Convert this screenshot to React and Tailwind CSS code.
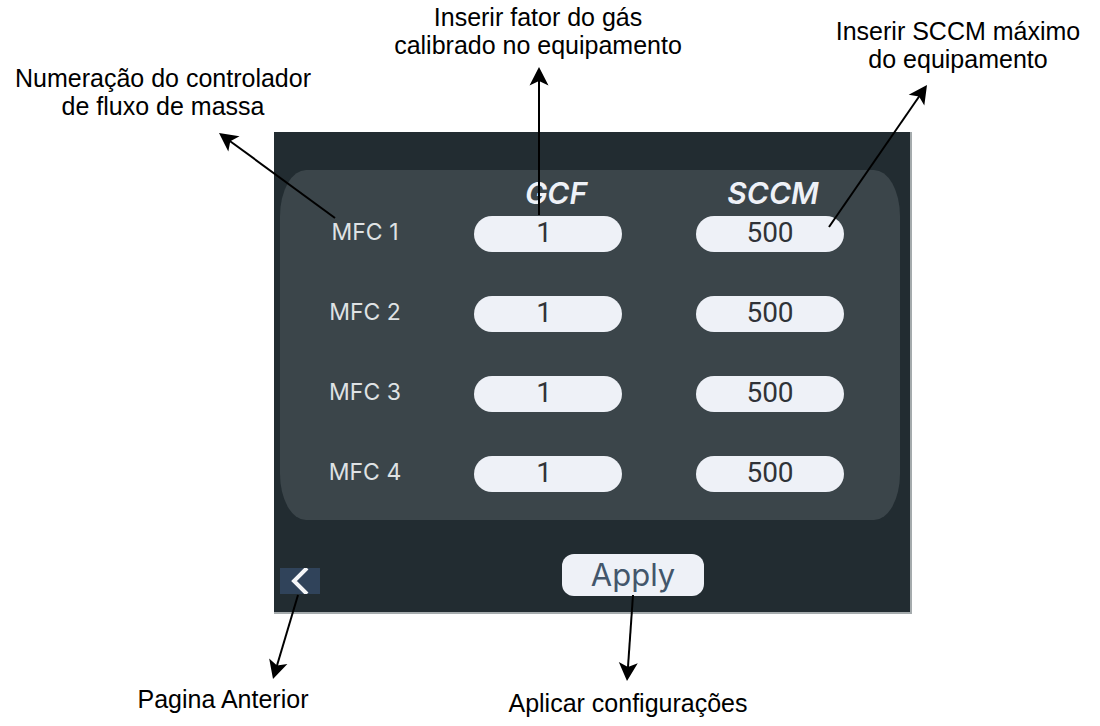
import React from "react";

const controllers = [1, 2, 3, 4];

const arrows = [
  { from: [335, 218], to: [219, 133] },
  { from: [539, 215], to: [539, 67] },
  { from: [829, 227], to: [927, 85] },
  { from: [298, 595], to: [273, 679] },
  { from: [633, 595], to: [627, 681] },
];

function Arrow({ from, to }) {
  const length = Math.hypot(to[0] - from[0], to[1] - from[1]);
  const angle = (Math.atan2(to[1] - from[1], to[0] - from[0]) * 180) / Math.PI;
  return (
    <g transform={`translate(${to[0]} ${to[1]}) rotate(${angle})`}>
      <path d={`M${-length} 0H-13`} stroke="black" strokeWidth="2" />
      <path d="M0 0L-18.5 9.5L-14 0L-18.5 -9.5Z" fill="black" />
    </g>
  );
}

function ValueInput({ label, initial, className = "" }) {
  return (
    <input
      type="text"
      aria-label={label}
      defaultValue={initial}
      className={`block mx-auto h-9 w-[148px] rounded-[18px] bg-[#eef1f7] pb-1 text-center font-[Roboto,sans-serif] text-[28px] leading-8 text-[#303338] outline-none ${className}`}
    />
  );
}

export default function App() {
  return (
    <main className="relative min-h-screen overflow-hidden bg-white font-['Liberation_Sans',sans-serif] text-[25px] leading-7 text-black">
      <header className="grid h-[132px] grid-cols-[326px_424px_1fr] text-center">
        <p className="pt-16">
          Numeração do controlador
          <br />
          de fluxo de massa
        </p>
        <p className="pt-[3px]">
          Inserir fator do gás
          <br />
          calibrado no equipamento
        </p>
        <p className="pt-[17px] pl-[66px]">
          Inserir SCCM máximo
          <br />
          do equipamento
        </p>
      </header>

      <section className="ml-[274px] w-full max-w-[638px] border-r-2 border-b-2 border-[#a5abad] bg-[#222c31] px-1.5 pt-[38px] pb-4 font-[Inter,sans-serif]">
        <div className="mr-1 rounded-[26px/46px] bg-[#3b454a]">
          <table className="w-full table-fixed border-collapse">
            <colgroup>
              <col className="w-[170px]" />
              <col className="w-[196px]" />
              <col />
            </colgroup>
            <thead>
              <tr className="h-[46px] text-[30px] leading-[46px] text-[#eef1f7] italic">
                <td />
                <th scope="col" className="p-0 pl-4 font-semibold">GCF</th>
                <th scope="col" className="p-0 font-semibold">SCCM</th>
              </tr>
            </thead>
            <tbody>
              {controllers.map((n) => (
                <tr key={n} className="group align-top">
                  <th scope="row" className="p-0 text-[23px] leading-8 font-normal text-[#dfe2e4]">
                    MFC {n}
                  </th>
                  <td className="p-0 pb-11 group-last:pb-7">
                    <ValueInput label={`GCF MFC ${n}`} initial="1" className="pr-2" />
                  </td>
                  <td className="p-0 pr-1.5 pb-11 group-last:pb-7">
                    <ValueInput label={`SCCM MFC ${n}`} initial="500" />
                  </td>
                </tr>
              ))}
            </tbody>
          </table>
        </div>

        <div className="mt-[34px] grid grid-cols-[282px_142px] items-end">
          <button
            type="button"
            aria-label="Pagina Anterior"
            className="mb-0.5 flex h-[26px] w-10 items-center justify-center bg-[#30435a]"
          >
            <svg width="40" height="26" viewBox="0 0 40 26" fill="none" aria-hidden="true">
              <path d="M27 0L14 13L27 26" stroke="#f5f6f8" strokeWidth="4" />
            </svg>
          </button>
          <button
            type="button"
            className="h-[42px] rounded-xl bg-[#eef1f7] text-[31px] leading-[42px] text-[#43566b]"
          >
            Apply
          </button>
        </div>
      </section>

      <footer className="grid grid-cols-[446px_364px] text-center">
        <p className="pt-[71px]">Pagina Anterior</p>
        <p className="pt-[75px]">Aplicar configurações</p>
      </footer>

      <svg
        className="pointer-events-none absolute top-0 left-0"
        width="1100"
        height="726"
        viewBox="0 0 1100 726"
        aria-hidden="true"
      >
        {arrows.map((arrow, i) => (
          <Arrow key={i} {...arrow} />
        ))}
      </svg>
    </main>
  );
}
